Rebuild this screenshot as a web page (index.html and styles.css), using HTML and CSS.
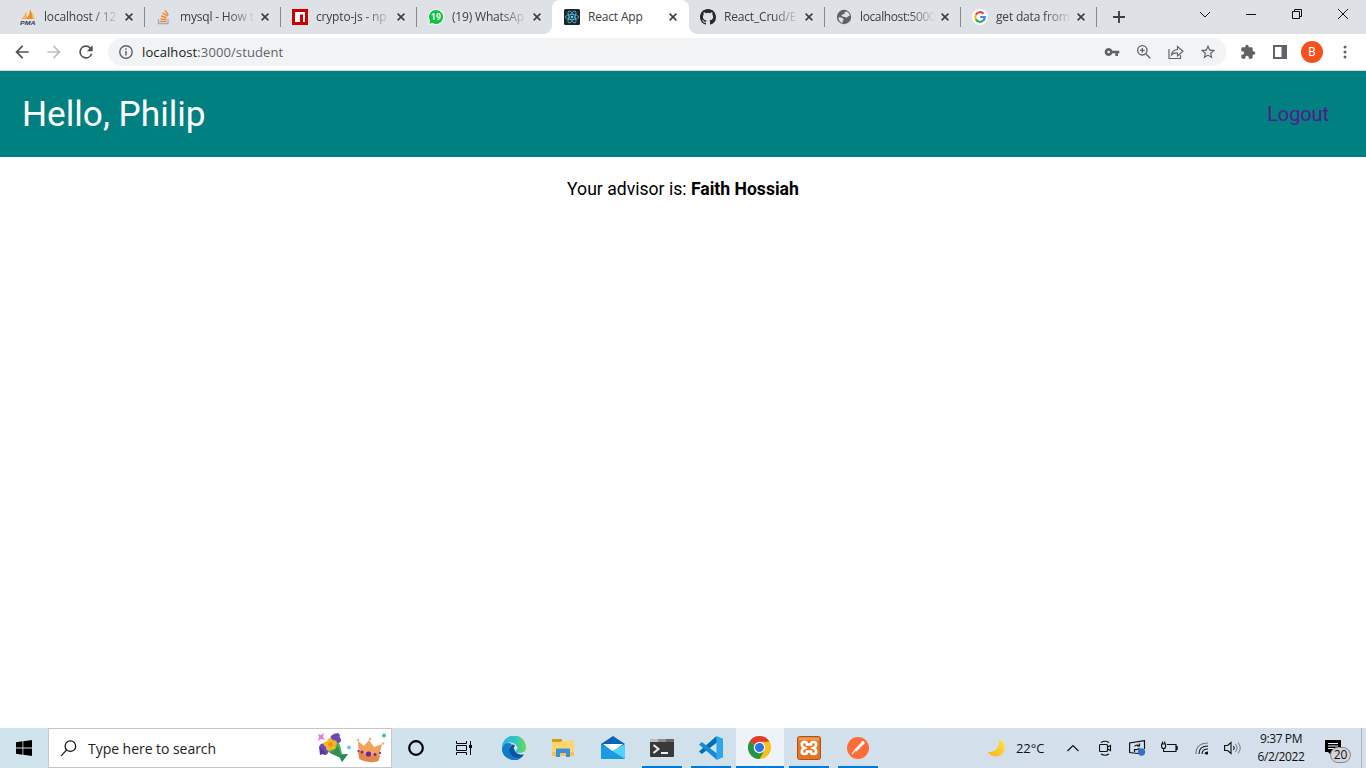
FILE: index.html
```html
<!DOCTYPE html>
<html lang="en">
<head>
<meta charset="utf-8">
<title>React App</title>
<link rel="stylesheet" href="styles.css">
</head>
<body>
<div class="screen">
<div class="tabstrip">
  <div class="tab"><svg class="fav" viewBox="0 0 16 16"><path d="M1 10Q5 7 6 2L7 10z" fill="#f9b04d"/><path d="M6 10Q10 6 10 0Q13 5 13 10z" fill="#f68b1f"/><path d="M12 3Q15 7 15 10H13z" fill="#fbc16c"/><text x="0" y="15.6" class="pma" textLength="15.5" lengthAdjust="spacingAndGlyphs">PMA</text></svg><span class="title">localhost / 12</span><svg class="close" viewBox="0 0 8 8"><path d="M.6.6l6.8 6.8M7.4.6L.6 7.4"/></svg></div>
  <div class="tab"><svg class="fav" viewBox="0 0 16 16" fill="none"><path d="M2.500 10v4.500h9.500V10" stroke="#a6a9ad" stroke-width="1.300"/><path d="M4.200 12.300h6M4.300 9.800l6 .7M5 7l5.700 1.600M6.500 4l5 3.100M9 1.400l3.400 4.700" stroke="#f48024" stroke-width="1.300"/></svg><span class="title">mysql - How t</span><svg class="close" viewBox="0 0 8 8"><path d="M.6.6l6.8 6.8M7.4.6L.6 7.4"/></svg></div>
  <div class="tab"><svg class="fav" viewBox="0 0 16 16"><path fill="#c00" d="M0 0h16v16H0z"/><path fill="#fff" d="M3 3h10v10h-2V5.500H8V13H3z"/></svg><span class="title">crypto-js - np</span><svg class="close" viewBox="0 0 8 8"><path d="M.6.6l6.8 6.8M7.4.6L.6 7.4"/></svg></div>
  <div class="tab"><svg class="fav" viewBox="0 0 16 16"><path d="M8 0a8 8 0 1 1-3.500 15.200L.2 16l.8-4.100A8 8 0 0 1 8 0z" fill="#fff" opacity=".85"/><path d="M8 1a7 7 0 1 1-3.500 13l-3 .7.6-3A7 7 0 0 1 8 1z" fill="#0fc542"/><text class="count" x="8" y="11.200" text-anchor="middle">19</text></svg><span class="title">(19) WhatsAp</span><svg class="close" viewBox="0 0 8 8"><path d="M.6.6l6.8 6.8M7.4.6L.6 7.4"/></svg></div>
  <div class="tab active"><svg class="fav" viewBox="0 0 16 16"><rect width="16" height="16" rx="1.500" fill="#20232a"/><g fill="none" stroke="#53c1de" stroke-width=".8"><ellipse cx="8" cy="8" rx="6.600" ry="2.600"/><ellipse cx="8" cy="8" rx="6.600" ry="2.600" transform="rotate(60 8 8)"/><ellipse cx="8" cy="8" rx="6.600" ry="2.600" transform="rotate(120 8 8)"/></g><circle cx="8" cy="8" r="1.300" fill="#61dafb"/></svg><span class="title">React App</span><svg class="close" viewBox="0 0 8 8"><path d="M.6.6l6.8 6.8M7.4.6L.6 7.4"/></svg></div>
  <div class="tab"><svg class="fav" viewBox="0 0 16 16"><path fill="#24292f" d="M8 0C3.58 0 0 3.58 0 8c0 3.54 2.29 6.53 5.47 7.59.4.07.55-.17.55-.38 0-.19-.01-.82-.01-1.49-2.01.37-2.53-.49-2.69-.94-.09-.23-.48-.94-.82-1.13-.28-.15-.68-.52-.01-.53.63-.01 1.08.58 1.23.82.72 1.21 1.87.87 2.33.66.07-.52.28-.87.51-1.07-1.78-.2-3.64-.89-3.64-3.95 0-.87.31-1.59.82-2.15-.08-.2-.36-1.02.08-2.12 0 0 .67-.21 2.2.82a7.6 7.6 0 0 1 4 0c1.53-1.04 2.2-.82 2.2-.82.44 1.1.16 1.92.08 2.12.51.56.82 1.27.82 2.15 0 3.07-1.87 3.75-3.65 3.95.29.25.54.73.54 1.48 0 1.07-.01 1.93-.01 2.2 0 .21.15.46.55.38A8.01 8.01 0 0 0 16 8c0-4.42-3.58-8-8-8z"/></svg><span class="title">React_Crud/E</span><svg class="close" viewBox="0 0 8 8"><path d="M.6.6l6.8 6.8M7.4.6L.6 7.4"/></svg></div>
  <div class="tab"><svg class="fav" viewBox="0 0 16 16"><circle cx="8" cy="8" r="7.200" fill="#5f6368"/><path d="M2.400 8.200L5.500 8.500 7.500 10v1.200l-1 .8.300 2Q2.500 13 2.400 8.200zM8.500 3.200l2.500-.7 2.200 2 .6 2.500-1.600.3-1.700 1.500L8.800 8 7 7.800 5.200 6.500 7 5.300l1.500-.4z" fill="#dee1e6"/></svg><span class="title port">localhost:5000</span><svg class="close" viewBox="0 0 8 8"><path d="M.6.6l6.8 6.8M7.4.6L.6 7.4"/></svg></div>
  <div class="tab"><svg class="fav" viewBox="0 0 16 16" fill="none" stroke-width="2.200"><circle cx="8" cy="8" r="8" fill="#fff"/><path d="M3.900 5.600A4.800 4.800 0 0 1 11.400 4.600" stroke="#ea4335"/><path d="M3.900 5.600a4.800 4.800 0 0 0 0 4.800" stroke="#fbbc05"/><path d="M3.900 10.400a4.800 4.800 0 0 0 7.200 1.300" stroke="#34a853"/><path d="M8.200 8h4.600a4.800 4.800 0 0 1-1.700 3.700" stroke="#4285f4"/></svg><span class="title">get data from</span><svg class="close" viewBox="0 0 8 8"><path d="M.6.6l6.8 6.8M7.4.6L.6 7.4"/></svg></div>
  <svg class="plus" viewBox="0 0 12 12"><path d="M6 0v12M0 6h12" stroke="#3c4043" stroke-width="1.900"/></svg>
  <div class="wincontrols">
    <svg viewBox="0 0 12 12"><path d="M1 4l5 5 5-5"/></svg>
    <svg viewBox="0 0 12 12"><path d="M1 6.500h10"/></svg>
    <svg viewBox="0 0 12 12"><path d="M1.500 3.500h7v7h-7zM3.500 3.500v-2h7v7h-2"/></svg>
    <svg viewBox="0 0 12 12"><path d="M1 1l10 10M11 1L1 11"/></svg>
  </div>
</div>
<div class="toolbar">
  <svg class="nav" viewBox="0 0 24 24"><path fill="#4d5156" d="M20 11H7.830l5.590-5.590L12 4l-8 8 8 8 1.410-1.410L7.830 13H20z"/></svg>
  <svg class="nav" viewBox="0 0 24 24"><path fill="#babcbe" d="M12 4l-1.410 1.410L16.170 11H4v2h12.170l-5.580 5.590L12 20l8-8z"/></svg>
  <svg class="nav" viewBox="0 0 24 24"><path fill="#4d5156" d="M17.650 6.350A8 8 0 1 0 19.730 14h-2.080A6 6 0 1 1 12 6c1.660 0 3.140.69 4.220 1.780L13 11h7V4z"/></svg>
  <div class="omnibox">
    <svg class="info" viewBox="0 0 14 14"><circle cx="7" cy="7" r="6.200" fill="none" stroke="#5f6368" stroke-width="1.400"/><path d="M7 6v4.400M7 3.300v1.500" stroke="#5f6368" stroke-width="1.500"/></svg>
    <span class="url"><b>localhost</b>:3000/student</span>
    <div class="actions">
      <svg viewBox="0 0 24 24"><path fill="#5f6368" fill-rule="evenodd" d="M12.650 10A6 6 0 1 0 12.650 14H17v4h4v-4h2v-4zM7 14a2 2 0 1 1 0-4 2 2 0 0 1 0 4z"/></svg>
      <svg viewBox="0 0 24 24" fill="none" stroke="#5f6368" stroke-width="2"><circle cx="9.500" cy="9.500" r="7"/><path d="M14.500 14.500l7 7M6 9.500h7M9.500 6v7"/></svg>
      <svg viewBox="0 0 16 16" fill="none" stroke="#5f6368" stroke-width="1.150"><path d="M1 5v9.500h11.500V11M3.500 11q.5-5 6-5.500V2.500L15 7.300l-5.500 4.700V9q-4-.5-6 2z"/></svg>
      <svg class="star" viewBox="1 1 22 22"><path fill="#5f6368" d="M22 9.240l-7.190-.62L12 2 9.190 8.630 2 9.240l5.460 4.730L5.820 21 12 17.270 18.180 21l-1.630-7.030zM12 15.400l-3.760 2.270 1-4.280-3.320-2.880 4.380-.38L12 6.100l1.710 4.040 4.380.38-3.320 2.880 1 4.280z"/></svg>
    </div>
  </div>
  <div class="extensions">
    <svg class="ext" viewBox="0 0 24 24"><path fill="#5f6368" d="M20.500 11H19V7a2 2 0 0 0-2-2h-4V3.500a2.500 2.500 0 0 0-5 0V5H4a2 2 0 0 0-2 2v3.800h1.500a2.700 2.700 0 0 1 0 5.400H2V20a2 2 0 0 0 2 2h3.800v-1.500a2.700 2.700 0 0 1 5.400 0V22H17a2 2 0 0 0 2-2v-4h1.500a2.500 2.500 0 0 0 0-5z"/></svg>
    <svg class="panel" viewBox="0 0 14 14"><path fill="#5f6368" fill-rule="evenodd" d="M0 0h14v14H0zM2 2v10h6.500V2z"/></svg>
    <span class="avatar">B</span>
    <svg class="more" viewBox="0 0 4 14" fill="#5f6368"><circle cx="2" cy="2" r="1.500"/><circle cx="2" cy="7" r="1.500"/><circle cx="2" cy="12" r="1.500"/></svg>
  </div>
</div>
<header class="header"><h1>Hello, Philip</h1><a class="logout" href="#">Logout</a></header>
<main class="main"><p>Your advisor is: <strong>Faith Hossiah</strong></p></main>
<footer class="taskbar">
  <div class="start"><svg viewBox="0 0 16 16" width="16" height="16"><path d="M0 2.200L6.500 1.300V7.600H0zM7.300 1.200L16 0v7.600H7.300zM0 8.400h6.500v6.300L0 13.800zM7.300 8.400H16V16l-8.700-1.200z"/></svg></div>
  <div class="search">
    <svg viewBox="0 0 18 18" width="17" height="17" fill="none" stroke="#111" stroke-width="1.300"><circle cx="11" cy="6.500" r="5.600"/><path d="M7 10.500L1 17"/></svg>
    <span>Type here to search</span>
    <svg class="gifts" viewBox="0 0 72 34" width="72" height="34">
      <path d="M2 3l3 1 3-2-1 4 2 3-4-1-3 2 1-4z" fill="#e27bea"/>
      <path d="M8 19L20 7l4 7 2 9 6 0-6 8-1-4z" fill="#4caf64"/><path d="M14 22l8-7 3 9 0 3z" fill="#348f4d"/><path d="M25 24l7-1-6 8-2-4z" fill="#2b8a58"/>
      <g fill="#7048b6"><circle cx="18" cy="7" r="3.500"/><circle cx="22" cy="9" r="3"/><circle cx="7" cy="16" r="3.500"/><circle cx="9" cy="21" r="3"/><path d="M17 3l5-1 2 2-1 6z"/></g><path d="M3 15l7 7-6 2z" fill="#5836a0"/>
      <g fill="#f8b526"><circle cx="14" cy="10" r="2.800"/><circle cx="10.500" cy="13" r="2.800"/><circle cx="13" cy="17" r="2.800"/><circle cx="17" cy="16" r="2.800"/><circle cx="18" cy="12" r="2.800"/></g><circle cx="14.500" cy="13.500" r="2.300" fill="#f18b13"/>
      <circle cx="33" cy="16.500" r="2" fill="#67cfe7"/><circle cx="68" cy="4.500" r="2" fill="#3cc980"/>
      <path d="M42 10l6 5 5-6 5 7 8-3-4 17q-9 3-19-2z" fill="#f2a25c"/><path d="M42 20q11 7 22 4l-1.500 6q-10 3-19-2z" fill="#e28848"/><g fill="#6d259b"><circle cx="52.500" cy="23" r="2.600"/><circle cx="46" cy="21" r="1.500"/><circle cx="59" cy="23.500" r="1.500"/><circle cx="42.500" cy="20" r="1.100"/><circle cx="64" cy="22" r="1.100"/></g><g fill="#efb07d"><circle cx="42" cy="9" r="1.300"/><circle cx="54" cy="8" r="1.300"/><circle cx="67" cy="12.500" r="1.300"/></g>
    </svg>
  </div>
  <div class="sys"><svg viewBox="0 0 16 16" width="16" height="16"><circle cx="8" cy="8" r="6.800" fill="none" stroke="#000" stroke-width="2.200"/></svg></div>
  <div class="sys"><svg viewBox="0 0 16 16" width="16" height="16" fill="none" stroke="#000" stroke-width="1"><path d="M.5 1v2.500h10V1M.5 5.500h10v5H.5zM.5 15v-2.500h10V15M14.500 1v14"/><path fill="#000" stroke="none" d="M13 5h3v3h-3z"/></svg></div>
  <div class="apps">
    <div class="app"><svg viewBox="0 0 24 24" width="24" height="24"><defs><linearGradient id="edge" x1="0" x2="1"><stop stop-color="#2baeea"/><stop offset=".55" stop-color="#32c5c6"/><stop offset="1" stop-color="#6bdc49"/></linearGradient></defs><path d="M0 12A12 12 0 0 0 20.500 20.500L16 13z" fill="#1878ca"/><path d="M0 12A12 12 0 0 1 24 11Q24 17 18 17Q13 17 14 14.500Q16 13 15 10.500Q13 6.500 8 6.500Q3 6.500 0 12z" fill="url(#edge)"/><path d="M0 12Q3 5 10 8Q5 13 9 18Q13 22 20.500 20.500A12 12 0 0 1 0 12z" fill="#117cc6"/><path d="M10.500 8.500Q5 12 8.500 18Q13 24 20.500 20.500L22 18Q15 20 12 15Q11 12 13 9.500Q12 8.500 10.500 8.500z" fill="#0d529e"/><path d="M12 12Q13 9 15 10.500Q16 13 14 14.500Q13 17 18 17Q20 17 22 16L22 18Q14 20 12 12z" fill="#d5e5ee"/></svg></div>
    <div class="app"><svg viewBox="0 0 22 20" width="22" height="20"><path d="M0 1h10v3H0z" fill="#dc9b0f"/><path d="M0 4h9l2-1.500h11V18H0z" fill="#fdd66d"/><path d="M0 14h22v4H0z" fill="#fac34b"/><path d="M4 19V11.500q0-1 1-1h12q1 0 1 1V19h-4v-4H8v4z" fill="#3a91dd"/></svg></div>
    <div class="app"><svg viewBox="0 0 24 24" width="24" height="24"><path d="M0 8l12-8 12 8v6H0z" fill="#0565b8"/><path d="M2 8h20l-10 8z" fill="#fff"/><path d="M0 8l12 7.500L24 8v15H0z" fill="#25aee9"/><path d="M24 8v15L11 15z" fill="#50d2fb"/><path d="M0 23V8l24 15z" fill="#189be0"/></svg></div>
    <div class="app running"><svg viewBox="0 0 24 20" width="24" height="20"><rect y="1" width="24" height="18" rx="1" fill="#393939"/><path d="M0 1h8v3H0z" fill="#bcbcbf"/><path d="M8 1h8v3H8z" fill="#8e8e92"/><path d="M16 1h8v3h-8z" fill="#66666b"/><path d="M3.500 7l5 4-5 4M11 15h7" fill="none" stroke="#eee" stroke-width="2"/></svg></div>
    <div class="app running"><svg viewBox="0 0 24 24" width="24" height="24"><path d="M17.500 0l.5 6.500L2.800 18 0 15.500z" fill="#006eb7"/><path d="M2.800 6L18 17.500V24L0 8.500z" fill="#168bd2"/><path d="M17.500 0L24 2.700v18.600L17.500 24z" fill="#29a7ef"/></svg></div>
    <div class="app running current"><svg viewBox="0 0 24 24" width="23" height="23"><circle cx="12" cy="12" r="12" fill="#fbc116"/><path d="M12 12L1.600 6A12 12 0 0 1 22.400 6H12z" fill="#e33b2e"/><path d="M12 12L1.600 6A12 12 0 0 0 12 24L17.200 15z" fill="#269447"/><circle cx="12" cy="12" r="6" fill="#fff"/><circle cx="12" cy="12" r="4.700" fill="#2c73e8"/></svg></div>
    <div class="app running"><svg viewBox="0 0 24 24" width="24" height="24"><rect x=".5" y=".5" width="23" height="23" rx="2" fill="#e87322" stroke="#a8531d"/><path d="M2 1.500h20v3H2z" fill="#f19a57"/><path d="M8 6q-4 0-3 3 0 2 2.500 3Q5 13 5 15q-1 3 3 3 2 0 2-2.500h4q0 2.500 2 2.500 4 0 3-3 0-2-2.500-3Q19 11 19 9q1-3-3-3-2 0-2 2.500h-4Q10 6 8 6z" fill="none" stroke="#fff" stroke-width="2.700"/></svg></div>
    <div class="app running"><svg viewBox="0 0 22 22" width="22" height="22"><circle cx="11" cy="11" r="11" fill="#ff6c37"/><circle cx="15.800" cy="5.800" r="1.900" fill="#fff"/><path d="M14.800 7L8.500 13.500" stroke="#fff" stroke-width="2.700"/><path d="M8.500 13L5 17" stroke="#fff" stroke-width="1.200"/></svg></div>
  </div>
  <div class="tray">
    <svg class="moon" viewBox="0 0 18 18"><defs><linearGradient id="moon" x1="0" y1="1" x2="1" y2="0"><stop stop-color="#ffb013"/><stop offset="1" stop-color="#ffe347"/></linearGradient></defs><path d="M11 0a9 9 0 1 1-11 13Q12 13 11 0z" fill="url(#moon)"/></svg>
    <span class="temp">22°C</span>
    <svg class="chev" viewBox="0 0 12 12"><path d="M.5 9L6 3.500 11.500 9"/></svg>
    <svg class="meet" viewBox="0 0 13 16"><path d="M2 2.500Q6 0 10 2.500M2 14q4 2.500 8 0M1.500 4.500h6q1 0 1 1v5q0 1-1 1h-6q-1 0-1-1v-5q0-1 1-1zM8.500 7l3-1.500v5L8.500 9"/></svg>
    <svg class="sync" viewBox="0 0 17 16"><path d="M9 13.500L.6 12.500V3L15.500.6V9M5.500 6.500q1-2 4-1.300M10.500 3.500v2.300H8M10.300 8q-1 2-4 1.700M5.500 12V9.500H8"/><circle cx="12.500" cy="12" r="3.700" fill="#2f73bd" stroke="none"/></svg>
    <svg class="battery" viewBox="0 0 17 14"><path d="M6 3.500h9v7H4.500M15 5.500h1.200v3H15M.6 3h4v2.500q0 2-2 2t-2-2zM1.600 3V.5M3.700 3V.5M2.600 7.500v3h2"/></svg>
    <svg class="wifi" viewBox="0 0 14 14"><path d="M1 13Q1 2 13 2" stroke="#777"/><path d="M4 13q0-8 9-8M7 13q0-5 6-5M10 13q0-2 3-2"/><path d="M10.500 13.500v-2.500h2.500v2.500z" fill="#111" stroke="none"/></svg>
    <svg class="sound" viewBox="0 0 17 14"><path d="M.6 4.500h3L7 1.500v11l-3.400-3h-3zM9.500 5q1.500 2 0 4"/><path d="M11.500 3q3 4 0 8M14 1.500q4.500 5.500 0 11" stroke="#84878e"/></svg>
    <div class="clock"><span>9:37 PM</span><span>6/2/2022</span></div>
    <div class="notify"><svg viewBox="0 0 16 16" width="16" height="16"><path d="M0 0h16v12H6v3l-3-3H0z"/><path d="M3 3.500h10M3 6h10M3 8.500h10" stroke="#eef2f8" stroke-width="1"/></svg><span class="badge">20</span></div>
    <i class="desktop"></i>
  </div>
</footer>
</div>
</body>
</html>
```
FILE: styles.css
```css
* { box-sizing: border-box; }
body { margin: 0; font-family: "Open Sans", sans-serif; background: #fff; }
svg { display: block; flex: none; }
.screen { width: 1366px; height: 768px; display: flex; flex-direction: column; overflow: hidden; }

.tabstrip { height: 34px; flex: none; display: flex; background: #dee1e6; padding-left: 8px; }
.tab { width: 136px; height: 34px; display: flex; align-items: center; padding-left: 12px; position: relative; }
.tab::after { content: ""; position: absolute; right: -1px; top: 7px; width: 1px; height: 20px; background: #85888d; }
.tab.active::after, .tab:nth-child(4)::after { display: none; }
.tab.active { background: #fff; border-radius: 8px 8px 0 0; width: 137px; margin-right: -1px; }
.tab:nth-child(4)::before { content: ""; position: absolute; right: 0; bottom: 0; width: 8px; height: 8px; background: radial-gradient(circle at 0 0, #dee1e6 7.5px, #fff 8px); }
.tab:nth-child(6)::before { content: ""; position: absolute; left: 1px; bottom: 0; width: 8px; height: 8px; background: radial-gradient(circle at 100% 0, #dee1e6 7.5px, #fff 8px); }
.fav { width: 16px; height: 16px; }
.pma { font: italic bold 6px "Liberation Sans", sans-serif; fill: #34346a; }
.count { font: bold 8.5px Roboto, sans-serif; fill: #fff; }
.title { width: 76px; margin-left: 8px; white-space: nowrap; font-size: 12px; line-height: 20px; letter-spacing: -.18px; color: #3c4043; -webkit-mask-image: linear-gradient(90deg, #000 48px, transparent 76px); mask-image: linear-gradient(90deg, #000 48px, transparent 76px); }
.title.port { letter-spacing: -.38px; }
.active .title { -webkit-mask-image: none; mask-image: none; }
.close { width: 8px; height: 8px; margin-left: 5px; fill: none; stroke: #3c4043; stroke-width: 1.6; overflow: visible; }
.plus { width: 12px; height: 12px; margin: 11px 0 0 17px; }
.wincontrols { margin: 8px 17px 0 auto; display: flex; gap: 34px; }
.wincontrols svg { width: 12px; height: 12px; fill: none; stroke: #111; stroke-width: 1; }

.toolbar { height: 37px; flex: none; display: flex; align-items: center; padding: 0 19px 1px 12px; border-bottom: 1px solid #d5dadd; }
.nav { width: 20px; height: 20px; margin-right: 12px; }
.omnibox { width: 1118px; height: 28px; background: #f1f3f4; border-radius: 14px; display: flex; align-items: center; padding: 0 10px 0 11px; }
.info { width: 14px; height: 14px; }
.url { margin-left: 9px; font-size: 13px; letter-spacing: .1px; color: #5f6368; }
.url b { font-weight: 400; color: #202124; }
.actions { margin-left: auto; display: flex; gap: 16px; }
.actions svg { width: 16px; height: 16px; }
.extensions { margin-left: auto; display: flex; align-items: center; }
.ext { width: 16px; height: 16px; margin-right: 17px; }
.panel { width: 14px; height: 14px; margin-right: 14px; }
.avatar { width: 22px; height: 22px; border-radius: 50%; background: #f4511e; color: #fff; font: 12px/22px Roboto, sans-serif; text-align: center; margin-right: 20px; }
.more { width: 4px; height: 14px; }

.header { height: 86px; flex: none; background: #008080; display: flex; align-items: center; justify-content: space-between; padding: 0 37px 1px 22px; font-family: Roboto, sans-serif; }
.header h1 { margin: 0; font-size: 35.2px; font-weight: 400; color: #fff; }
.logout { font-size: 20px; font-weight: 400; letter-spacing: -.1px; color: #551a8b; text-decoration: none; }
.main { flex: 1; text-align: center; font: 17.6px/22px Roboto, sans-serif; color: #000; }
.main p { margin: 21px 0 0; }
.main strong { font-weight: 700; }

.taskbar { height: 40px; flex: none; display: flex; background: linear-gradient(90deg, #cfe4ed, #d1e1eb 50%, #d6dfec); }
.start, .sys { width: 48px; display: flex; align-items: center; justify-content: center; }
.search { width: 344px; background: #fff; border: 1px solid #c5c6c7; display: flex; align-items: center; padding: 0 3px 0 11px; font-size: 14px; letter-spacing: -.04px; color: #222; }
.search span { margin-left: 11px; }
.gifts { margin-left: auto; }
.apps { margin-left: 2.4px; display: flex; gap: 1.1px; }
.app { width: 48px; height: 40px; padding-bottom: 1px; display: flex; align-items: center; justify-content: center; }
.running { background: linear-gradient(#0078d7, #0078d7) center bottom / 40px 2px no-repeat; }
.current { background: linear-gradient(#0078d7, #0078d7) center bottom / 48px 2px no-repeat, #edf3f8; }
.tray { margin-left: auto; display: flex; align-items: center; }
.tray > svg { fill: none; stroke: #111; stroke-width: 1.15; }
.tray .moon { width: 18px; height: 18px; stroke: none; margin-right: 10px; }
.temp { width: 30px; font-size: 13px; letter-spacing: -.1px; color: #111; margin-right: 21px; }
.chev { width: 12px; height: 12px; margin-right: 20px; }
.meet { width: 13px; height: 16px; margin-right: 17px; }
.sync { width: 17px; height: 16px; margin-right: 15px; }
.battery { width: 17px; height: 14px; margin-right: 17px; }
.wifi { width: 14px; height: 14px; margin-right: 15px; }
.sound { width: 17px; height: 14px; margin-right: 9px; }
.clock { width: 62px; display: flex; flex-direction: column; text-align: center; font-size: 12px; line-height: 18px; letter-spacing: -.4px; color: #111; margin-right: 13px; }
.notify { width: 27px; height: 24px; padding-top: 4px; position: relative; margin-right: 9px; }
.badge { position: absolute; left: 5px; top: 11px; width: 21px; height: 16px; border: 1px solid #888; border-radius: 8px; background: #d3d5da; font-size: 12px; line-height: 14px; text-align: center; color: #111; }
.desktop { width: 5px; height: 40px; border-left: 1px solid #aab3be; }
```
